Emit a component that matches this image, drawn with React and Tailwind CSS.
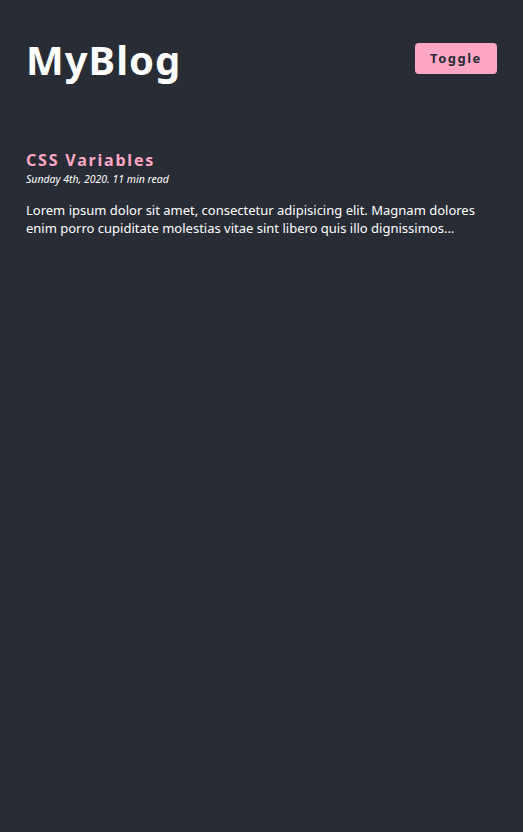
import React from "react";

const font = { fontFamily: '"Noto Sans", "Open Sans", sans-serif' };

export default function App() {
  return (
    <div className="min-h-[832px] w-full bg-[#282c35] text-white" style={font}>
      <div className="px-[26px] pt-[36px]">
        <header className="flex items-start justify-between">
          <h1 className="-mt-[2px] text-[40px] font-bold leading-[52px] tracking-[1px]">MyBlog</h1>
          <button className="mt-[7px] h-[31px] w-[82px] rounded-[4px] bg-[#ffa7c4] text-[13px] font-bold tracking-[1.5px] text-[#282c35]">
            Toggle
          </button>
        </header>

        <article className="mt-[64px]">
          <h2 className="text-[16px] font-bold leading-[20px] tracking-[1.8px] text-[#ffa7c4]">
            CSS Variables
          </h2>
          <p className="mt-[2px] text-[10.5px] italic leading-[14px]">Sunday 4th, 2020. 11 min read</p>
          <p className="mt-[15px] text-[13px] leading-[18px]">
            Lorem ipsum dolor sit amet, consectetur adipisicing elit. Magnam dolores enim porro cupiditate molestias vitae sint libero quis illo dignissimos...
          </p>
        </article>
      </div>
    </div>
  );
}
